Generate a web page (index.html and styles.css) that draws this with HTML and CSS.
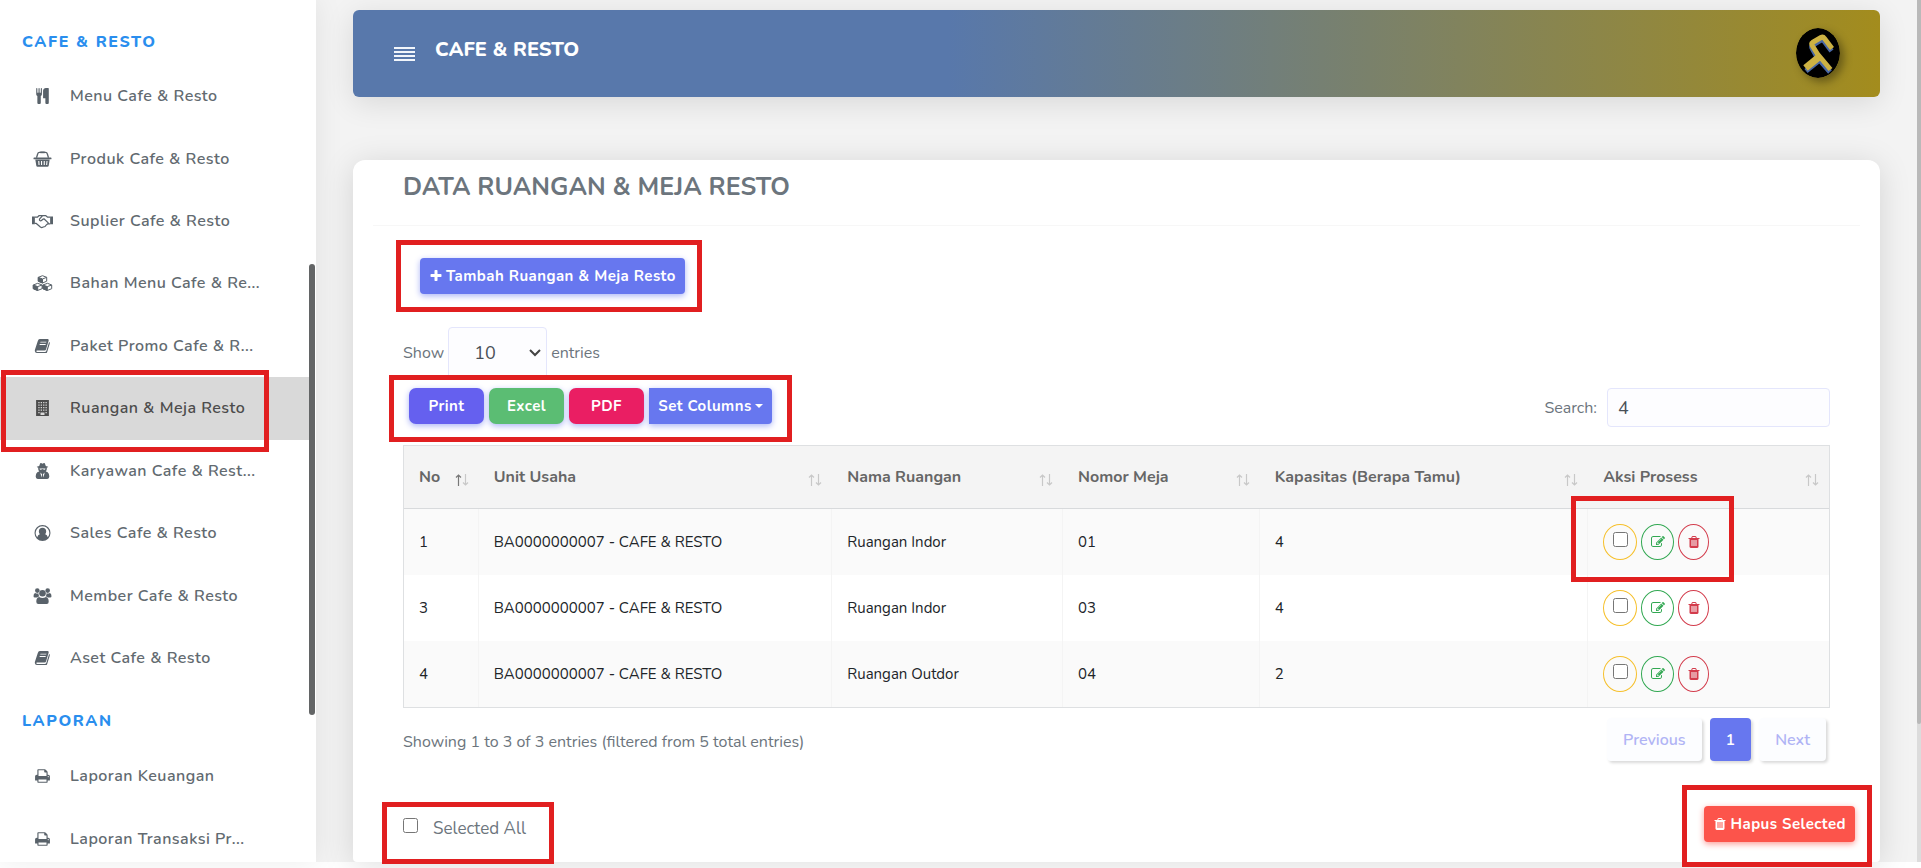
FILE: index.html
```html
<!DOCTYPE html>
<html lang="id">
<head>
<meta charset="utf-8">
<title>Data Ruangan &amp; Meja Resto</title>
<link rel="stylesheet" href="styles.css">
</head>
<body>
<svg class="sprite" aria-hidden="true">
  <symbol id="i-cutlery" viewBox="0 0 1792 1792"><path d="M832 64v640q0 61-35.500 111t-92.500 70v779q0 52-38 90t-90 38h-128q-52 0-90-38t-38-90v-779q-57-20-92.500-70t-35.500-111v-640q0-26 19-45t45-19 45 19 19 45v416q0 26 19 45t45 19 45-19 19-45v-416q0-26 19-45t45-19 45 19 19 45v416q0 26 19 45t45 19 45-19 19-45v-416q0-26 19-45t45-19 45 19 19 45zm768 0v1600q0 52-38 90t-90 38h-128q-52 0-90-38t-38-90v-512h-224q-13 0-22.500-9.500t-9.500-22.500v-800q0-132 94-226t226-94h256q26 0 45 19t19 45z"/></symbol>
  <symbol id="i-basket" viewBox="0 0 18 16"><path d="M.8 6.600h16.400a.8.8 0 0 1 0 1.700H.8a.8.8 0 0 1 0-1.700z"/><path fill-rule="evenodd" d="M1.800 8.600h14.400l-1 6.200a1.300 1.300 0 0 1-1.200 1H4a1.300 1.300 0 0 1-1.200-1zM4.700 10l.3 4h1.100l-.3-4zM7.500 10v4h1.100v-4zM10.200 10v4h1.100v-4zM13 10l-.4 4h1.100l.3-4z"/><path d="M3 6.800l1.300-4.300Q4.600 1.300 5.900 1.300h6.200q1.300 0 1.600 1.200L15 6.800" fill="none" stroke="currentColor" stroke-width="1.300"/><path d="M6.800.5h4.400v1.700H6.800z"/></symbol>
  <symbol id="i-handshake" viewBox="0 0 22 16"><path d="M0 3.400h3v8H0zM19 3.400h3v8h-3z"/><g fill="none" stroke="currentColor" stroke-width="1.300" stroke-linejoin="round"><path d="M3 4h2.600L7.500 2.300h3.300M19 4h-2.600l-2.200-1.700h-3L8 5.800q-.7 1.800 1 2 1.200 0 2.200-1.500l1.300-.6 4.500 4.300q.3 1-1 1.200M3 10.600h1.500l4.300 3.700q1.300 1 2.500.2 2.800-.2 3.500-2.200l1.400-1.200H19"/></g></symbol>
  <symbol id="i-cubes" viewBox="0 0 20 16"><g stroke="currentColor" stroke-width="1" stroke-linejoin="round"><path fill="none" d="M5.800 2.300v3.900L10 8l4.200-1.800V2.300L10 .7zM.8 10v3.700l4.200 1.800 4.600-1.800V10L5.200 8.300zM10.400 10v3.700l4.400 1.800 4.400-1.800V10l-4.200-1.700z"/><path d="M5.800 2.300L10 4v4L5.800 6.200zM.8 10l4.400 1.600v3.900L.8 13.700zM10.400 10l4.400 1.600v3.900l-4.400-1.800z"/><path fill="none" d="M10 4l4.200-1.700M5.200 11.600L9.600 10M14.800 11.600l4.400-1.600"/></g></symbol>
  <symbol id="i-book" viewBox="0 0 16 16"><path fill-rule="evenodd" d="M5.300 1h8q1.200.2.900 1.400l-2.700 9.200q-.3 1-1.400 1H2.600q-1 0-.8.700.2.600 1 .6h7.900q.8 0 1.100-.8L14.600 4q1 .4.700 1.500l-2.600 8.400q-.4 1.200-1.500 1.200H2.700Q.8 15 .4 13.200q-.2-.8.100-1.600L3.300 2.900Q3.800 1.200 5.300 1zM6 3.700l-.3.900h6l.3-.9zM5.300 6l-.3.900h6l.3-.9z"/></symbol>
  <symbol id="i-building" viewBox="0 0 14 16"><path fill-rule="evenodd" d="M.6 0h12.800v16H.6zM2.800 2v1.300h1.300V2zm2.400 0v1.300h1.300V2zm2.400 0v1.300h1.300V2zM10 2v1.300h1.300V2zM2.800 4.500v1.300h1.300V4.500zm2.400 0v1.300h1.300V4.500zm2.400 0v1.300h1.300V4.500zm2.400 0v1.300h1.300V4.500zM2.800 7v1.300h1.300V7zm2.400 0v1.300h1.300V7zm2.400 0v1.300h1.300V7zM10 7v1.300h1.300V7zM2.800 9.500v1.300h1.300V9.500zm2.400 0v1.300h1.300V9.500zm2.400 0v1.300h1.300V9.500zm2.400 0v1.300h1.300V9.500zM2.800 12v1.300h1.300V12zM10 12v1.300h1.300V12zM5 12.500V15h4v-2.500z"/></symbol>
  <symbol id="i-secret" viewBox="0 0 14 16"><path fill-rule="evenodd" d="M4.700.3Q5.600-.2 7 .7 8.400-.2 9.300.3l1 2.600 2.400.8q.2.600-1.500 1.100.5 2-1 3.700l1.700.6q2 1.400 1.900 4.500 0 2.200-2 2.400H2.200Q.2 15.800.2 13.600.1 10.500 2.100 9.100l1.700-.6q-1.500-1.700-1-3.700-1.700-.5-1.500-1.100l2.400-.8zM4 5.500q.2 1.300 1.300 1.200L7 5.900l1.700.8Q9.800 6.800 10 5.500zM4.800 9.500l1.200 5 .6-3.300zM9.200 9.500l-1.800 1.700.6 3.300z"/></symbol>
  <symbol id="i-usercircle" viewBox="0 0 16 16"><path fill-rule="evenodd" d="M8 0a8 8 0 1 1 0 16A8 8 0 0 1 8 0zm0 1.200A6.800 6.800 0 0 0 2.700 12.200Q3.300 9.600 5.300 9.200 4.300 8 4.300 6.300 4.500 2.800 8 2.700q3.500.1 3.700 3.600 0 1.700-1 2.900 2 .4 2.600 3A6.800 6.800 0 0 0 8 1.200z" transform="rotate(0)"/></symbol>
  <symbol id="i-users" viewBox="0 0 18 16"><circle cx="3.800" cy="2.600" r="2.300"/><circle cx="14.200" cy="2.600" r="2.300"/><circle cx="9" cy="5.200" r="3.300"/><path d="M1.700 5q1.800 1 3.300.2-.2 1.800.9 3.200-1.400 0-2.400 1.200H1.400Q0 9.500 0 8.200 0 5.400 1.700 5zM16.300 5q-1.800 1-3.300.2.200 1.800-.9 3.200 1.400 0 2.400 1.200h2.100Q18 9.500 18 8.200 18 5.400 16.300 5zM5.600 9Q9 11.200 12.400 9q2.800.6 2.800 4.700 0 2.200-2 2.300H4.800q-2-.1-2-2.300Q2.800 9.600 5.600 9z"/></symbol>
  <symbol id="i-print" viewBox="0 0 1792 1792"><path d="M448 1536h896v-256h-896v256zm0-640h896v-384h-160q-40 0-68-28t-28-68v-160h-640v640zm1152 64q0-26-19-45t-45-19-45 19-19 45 19 45 45 19 45-19 19-45zm128 0v416q0 13-9.500 22.500t-22.500 9.500h-224v160q0 40-28 68t-68 28h-960q-40 0-68-28t-28-68v-160h-224q-13 0-22.500-9.500t-9.500-22.500v-416q0-79 56.500-135.500t135.500-56.500h64v-544q0-40 28-68t68-28h672q40 0 88 20t76 48l152 152q28 28 48 76t20 88v256h64q79 0 135.500 56.500t56.500 135.500z"/></symbol>
  <symbol id="i-plus" viewBox="0 0 1792 1792"><path d="M1600 736v192q0 40-28 68t-68 28h-416v416q0 40-28 68t-68 28h-192q-40 0-68-28t-28-68v-416h-416q-40 0-68-28t-28-68v-192q0-40 28-68t68-28h416v-416q0-40 28-68t68-28h192q40 0 68 28t28 68v416h416q40 0 68 28t28 68z"/></symbol>
  <symbol id="i-trash" viewBox="0 0 1792 1792"><path d="M704 1376v-704q0-14-9-23t-23-9h-64q-14 0-23 9t-9 23v704q0 14 9 23t23 9h64q14 0 23-9t9-23zm256 0v-704q0-14-9-23t-23-9h-64q-14 0-23 9t-9 23v704q0 14 9 23t23 9h64q14 0 23-9t9-23zm256 0v-704q0-14-9-23t-23-9h-64q-14 0-23 9t-9 23v704q0 14 9 23t23 9h64q14 0 23-9t9-23zm-544-992h448l-48-117q-7-9-17-11h-317q-10 2-17 11zm928 32v64q0 14-9 23t-23 9h-96v948q0 83-47 143.500t-113 60.500h-832q-66 0-113-58.500t-47-141.500v-952h-96q-14 0-23-9t-9-23v-64q0-14 9-23t23-9h309l70-167q15-37 54-63t79-26h320q40 0 79 26t54 63l70 167h309q14 0 23 9t9 23z"/></symbol>
  <symbol id="i-edit" viewBox="0 0 1792 1792"><path d="M888 1184l116-116-152-152-116 116v56h96v96h56zm440-720q-16-16-33 1l-350 350q-17 17-1 33t33-1l350-350q17-17 1-33zm80 594v190q0 119-84.500 203.500t-203.500 84.500h-832q-119 0-203.500-84.500t-84.500-203.500v-832q0-119 84.500-203.500t203.500-84.500h832q63 0 117 25 15 7 18 23 3 17-9 29l-49 49q-14 14-32 8-23-6-45-6h-832q-66 0-113 47t-47 113v832q0 66 47 113t113 47h832q66 0 113-47t47-113v-126q0-13 9-22l64-64q15-15 35-7t20 29zm-96-738l288 288-672 672h-288v-288zm444 132l-92 92-288-288 92-92q28-28 68-28t68 28l152 152q28 28 28 68t-28 68z"/></symbol>
  <symbol id="i-up" viewBox="0 0 7 12"><path d="M3.500 12V1M1 3.500L3.500 1 6 3.500" fill="none" stroke="currentColor" stroke-width="1.200"/></symbol>
  <symbol id="i-down" viewBox="0 0 7 12"><path d="M3.500 0v11M1 8.500L3.500 11 6 8.500" fill="none" stroke="currentColor" stroke-width="1.200"/></symbol>
</svg>

<div class="app">
  <aside class="sidebar">
    <nav class="menu">
      <h2 class="menu-title">CAFE &amp; RESTO</h2>
      <a class="item" href="#"><svg><use href="#i-cutlery"/></svg>Menu Cafe &amp; Resto</a>
      <a class="item" href="#"><svg><use href="#i-basket"/></svg>Produk Cafe &amp; Resto</a>
      <a class="item" href="#"><svg><use href="#i-handshake"/></svg>Suplier Cafe &amp; Resto</a>
      <a class="item" href="#"><svg><use href="#i-cubes"/></svg>Bahan Menu Cafe &amp; Re...</a>
      <a class="item" href="#"><svg><use href="#i-book"/></svg>Paket Promo Cafe &amp; R...</a>
      <a class="item active mark mark-item" href="#"><svg><use href="#i-building"/></svg>Ruangan &amp; Meja Resto</a>
      <a class="item" href="#"><svg><use href="#i-secret"/></svg>Karyawan Cafe &amp; Rest...</a>
      <a class="item" href="#"><svg><use href="#i-usercircle"/></svg>Sales Cafe &amp; Resto</a>
      <a class="item" href="#"><svg><use href="#i-users"/></svg>Member Cafe &amp; Resto</a>
      <a class="item" href="#"><svg><use href="#i-book"/></svg>Aset Cafe &amp; Resto</a>
      <h2 class="menu-title second">LAPORAN</h2>
      <a class="item" href="#"><svg><use href="#i-print"/></svg>Laporan Keuangan</a>
      <a class="item" href="#"><svg><use href="#i-print"/></svg>Laporan Transaksi Pr...</a>
    </nav>
    <div class="side-thumb"></div>
  </aside>

  <main class="main">
    <header class="topbar">
      <button class="burger" type="button" aria-label="Menu"><svg viewBox="0 0 21 16"><path d="M0 0h21v2H0zM0 4h21v2H0zM0 8h21v2H0zM0 12h21v2H0z"/></svg></button>
      <h1 class="brand">CAFE &amp; RESTO</h1>
      <svg class="logo" viewBox="0 0 44 50" role="img" aria-label="Logo"><ellipse cx="22" cy="25" rx="22" ry="25" fill="#000"/><g fill="none" stroke="#4a68a5" stroke-width="5" stroke-linejoin="round"><path d="M35.500 23L28 13Q26.500 11.500 24.500 12.500L16.500 17.500Q15 18.500 16.500 21L21 29 34 44M10 43l12.500-10"/></g><g fill="none" stroke="#cdb243" stroke-linejoin="round"><path stroke-width="5" d="M36 20.500L28.500 10.500Q27 8.500 25 9.500L16.500 14.500Q15 15.500 16.500 18L21.500 26 34.500 41.500"/><path stroke-width="7" d="M9.500 40L23 29"/></g></svg>
    </header>

    <section class="card">
      <h2 class="title">DATA RUANGAN &amp; MEJA RESTO</h2>
      <div class="content">
        <div class="add-row"><span class="mark mark-add"><button class="btn" type="button"><svg class="ic"><use href="#i-plus"/></svg> Tambah Ruangan &amp; Meja Resto</button></span></div>

        <div class="length"><label for="len">Show</label><select id="len"><option>10</option><option>25</option></select><span>entries</span></div>

        <div class="tools">
          <div class="exports mark mark-tools">
            <button class="btn wide print" type="button">Print</button>
            <button class="btn wide excel" type="button">Excel</button>
            <button class="btn wide pdf" type="button">PDF</button>
            <button class="btn cols" type="button">Set Columns <i class="caret"></i></button>
          </div>
          <div class="search"><label for="q">Search:</label><input id="q" type="text" value="4"></div>
        </div>

        <table class="grid">
          <colgroup><col class="c1"><col class="c2"><col class="c3"><col class="c4"><col class="c5"><col class="c6"></colgroup>
          <thead><tr>
            <th class="asc">No<span class="sort"><svg><use href="#i-up"/></svg><svg><use href="#i-down"/></svg></span></th>
            <th>Unit Usaha<span class="sort"><svg><use href="#i-up"/></svg><svg><use href="#i-down"/></svg></span></th>
            <th>Nama Ruangan<span class="sort"><svg><use href="#i-up"/></svg><svg><use href="#i-down"/></svg></span></th>
            <th>Nomor Meja<span class="sort"><svg><use href="#i-up"/></svg><svg><use href="#i-down"/></svg></span></th>
            <th>Kapasitas (Berapa Tamu)<span class="sort"><svg><use href="#i-up"/></svg><svg><use href="#i-down"/></svg></span></th>
            <th>Aksi Prosess<span class="sort"><svg><use href="#i-up"/></svg><svg><use href="#i-down"/></svg></span></th>
          </tr></thead>
          <tbody>
            <tr><td>1</td><td>BA0000000007 - CAFE &amp; RESTO</td><td>Ruangan Indor</td><td>01</td><td>4</td>
              <td><div class="acts mark mark-acts"><label class="pill pick"><input type="checkbox" aria-label="Pilih 1"></label><button class="pill edit" type="button" aria-label="Edit"><svg><use href="#i-edit"/></svg></button><button class="pill del" type="button" aria-label="Hapus"><svg><use href="#i-trash"/></svg></button></div></td></tr>
            <tr><td>3</td><td>BA0000000007 - CAFE &amp; RESTO</td><td>Ruangan Indor</td><td>03</td><td>4</td>
              <td><div class="acts"><label class="pill pick"><input type="checkbox" aria-label="Pilih 3"></label><button class="pill edit" type="button" aria-label="Edit"><svg><use href="#i-edit"/></svg></button><button class="pill del" type="button" aria-label="Hapus"><svg><use href="#i-trash"/></svg></button></div></td></tr>
            <tr><td>4</td><td>BA0000000007 - CAFE &amp; RESTO</td><td>Ruangan Outdor</td><td>04</td><td>2</td>
              <td><div class="acts"><label class="pill pick"><input type="checkbox" aria-label="Pilih 4"></label><button class="pill edit" type="button" aria-label="Edit"><svg><use href="#i-edit"/></svg></button><button class="pill del" type="button" aria-label="Hapus"><svg><use href="#i-trash"/></svg></button></div></td></tr>
          </tbody>
        </table>

        <div class="foot">
          <p class="info">Showing 1 to 3 of 3 entries (filtered from 5 total entries)</p>
          <div class="pager"><button type="button" class="pg">Previous</button><button type="button" class="pg on">1</button><button type="button" class="pg">Next</button></div>
        </div>
      </div>

      <div class="bulk">
        <label class="all mark mark-all"><input type="checkbox"><span>Selected All</span></label>
        <span class="mark mark-del"><button class="btn danger" type="button"><svg class="ic"><use href="#i-trash"/></svg> Hapus Selected</button></span>
      </div>
    </section>
  </main>
  <div class="scroll"><div class="scroll-thumb"></div></div>
</div>
</body>
</html>
```
FILE: styles.css
```css
* { box-sizing: border-box; }
body {
  margin: 0;
  height: 100vh;
  overflow: hidden;
  background: #fff;
  color: #6c757d;
  font: 16px/22px Nunito, Lato, "Open Sans", sans-serif;
}
button, input, select { font: inherit; }
.sprite { position: absolute; width: 0; height: 0; }

.app { display: flex; height: calc(100vh - 6px); background: #f3f3f3; }

/* red frames drawn over highlighted controls */
.mark { position: relative; }
.mark::after {
  content: "";
  position: absolute;
  border: 5px solid #e11f20;
  pointer-events: none;
  z-index: 3;
}
.mark-item::after { inset: -7px 40px -12px 1px; }
.mark-add::after { inset: -18px -17px -18px -24px; }
.mark-tools::after { inset: -13px -20px -18px; }
.mark-acts::after { inset: -28px -25px -22px -32px; }
.mark-all::after { inset: -16px -28px -24px -21px; }
.mark-del::after { inset: -21px -17px -25px -22px; }

/* sidebar */
.sidebar {
  position: relative;
  flex: none;
  width: 316px;
  background: #fff;
  box-shadow: 0 0 28px rgba(0, 0, 0, .08);
}
.menu { display: flex; flex-direction: column; height: calc(100vh + 2px); padding-right: 7px; }
.menu-title {
  flex: none;
  height: 65px;
  margin: 0;
  padding: 31px 22px 0;
  color: #2a8eee;
  font-size: 16px;
  font-weight: 800;
  line-height: 22px;
  letter-spacing: .1em;
}
.menu-title.second { height: 56px; padding-top: 21px; }
.item {
  flex: 1 1 0;
  display: flex;
  align-items: center;
  gap: 17px;
  padding-left: 32px;
  color: #626a70;
  font-weight: 600;
  letter-spacing: .03em;
  text-decoration: none;
  white-space: nowrap;
}
.item svg { width: 21px; height: 16px; fill: currentColor; color: #59626a; }
.item.active { background: #d9d9d9; color: #4c4c4c; }
.item.active svg { color: #4c4c4c; }
.side-thumb {
  position: absolute;
  top: 264px;
  right: 1px;
  width: 6px;
  height: 451px;
  border-radius: 3px;
  background: #636566;
}

/* header */
.main { flex: 1; min-width: 0; padding: 10px 37px 0; }
.topbar {
  display: flex;
  align-items: flex-start;
  height: 87px;
  padding: 18px 40px 0 41px;
  border-radius: 6px;
  background: linear-gradient(90deg, #5878ab 39%, #a38c1d);
  box-shadow: 0 6px 30px rgba(0, 0, 0, .11);
}
.burger { margin-top: 19px; padding: 0; border: 0; background: none; line-height: 0; }
.burger svg { width: 21px; height: 16px; fill: #f2f6fb; }
.brand {
  flex: 1;
  margin: 9px 0 0 20px;
  color: #fff;
  font-size: 20px;
  font-weight: 800;
  line-height: 26px;
}
.logo { width: 44px; height: 50px; border-radius: 50%; box-shadow: 4px 4px 8px rgba(0, 0, 0, .35); }

/* card */
.card {
  margin-top: 63px;
  height: calc(100vh - 166px);
  border-radius: 12px 12px 4px 4px;
  background: #fff;
  box-shadow: 0 4px 32px rgba(0, 0, 0, .13);
}
.title {
  margin: 0 20px;
  padding: 11px 30px 22px;
  border-bottom: 1px solid #f7f7f7;
  color: #6c757d;
  font-size: 25px;
  font-weight: 700;
  line-height: 32px;
}
.content { padding: 32px 50px 0; }
.add-row { display: flex; padding-left: 17px; }
.add-row .mark, .bulk .mark { display: flex; }
.btn {
  display: flex;
  align-items: center;
  justify-content: center;
  gap: 3px;
  height: 36px;
  padding: 0 9px;
  border: 0;
  border-radius: 4px;
  background: #6777ef;
  box-shadow: 0 2px 6px #acb5f6;
  color: #fff;
  font-size: 15px;
  font-weight: 700;
  letter-spacing: .03em;
  white-space: nowrap;
}
.ic { width: 14px; height: 14px; fill: currentColor; }
.length { display: flex; align-items: center; gap: 4px; height: 52px; margin-top: 33px; }
.length select {
  appearance: none;
  width: 99px;
  height: 52px;
  padding: 0 25px;
  border: 1px solid #e4e6fc;
  border-radius: 4px;
  background: #fdfdff url("data:image/svg+xml,%3Csvg xmlns='http://www.w3.org/2000/svg' viewBox='0 0 12 8'%3E%3Cpath d='M1 1l5 5 5-5' fill='none' stroke='%23444' stroke-width='2'/%3E%3C/svg%3E") no-repeat right 5px center / 12px 8px;
  color: #495057;
  font-size: 18px;
}
.tools { display: flex; justify-content: space-between; margin-top: 9px; padding-left: 6px; }
.exports { display: flex; gap: 5px; height: 36px; }
.wide { width: 75px; border-radius: 7px; }
.print { background: #6560ef; }
.excel { background: #5bbd73; }
.pdf { background: #ea1e63; }
.cols { width: 123px; border-radius: 0 4px 4px 0; }
.caret { border: 4px solid transparent; border-top-color: #fff; border-bottom: 0; }
.search { display: flex; align-items: center; gap: 10px; }
.search input {
  width: 223px;
  height: 39px;
  padding: 0 10px;
  border: 1px solid #e4e6fc;
  border-radius: 4px;
  background: #fdfdff;
  color: #495057;
  font-size: 18px;
}

/* table */
.grid {
  width: 100%;
  margin-top: 18px;
  table-layout: fixed;
  border: 1px solid #dee0e2;
  border-collapse: separate;
  border-spacing: 0;
}
.c1 { width: 5.250%; } .c2 { width: 24.800%; } .c3 { width: 16.200%; }
.c4 { width: 13.800%; } .c5 { width: 23.050%; } .c6 { width: 16.900%; }
.grid th {
  position: relative;
  height: 63px;
  padding: 0 15px;
  border-bottom: 1px solid #d8dadc;
  background: #f4f4f4;
  color: #666;
  font-weight: 700;
  text-align: left;
}
.sort { position: absolute; right: 10px; bottom: 22px; display: flex; color: #c8c8c8; }
.sort svg { width: 7px; height: 12px; }
.asc .sort svg:first-child { color: #777; }
.grid td {
  height: 66px;
  padding: 0 15px;
  border-right: 1px solid #f4f4f4;
  color: #212529;
  font-size: 15px;
}
.grid td:last-child { border-right: 0; }
.grid tbody tr:nth-child(odd) { background: #fafafa; }
.acts { display: inline-flex; gap: 4px; vertical-align: middle; }
.pill {
  display: flex;
  align-items: center;
  justify-content: center;
  height: 36px;
  padding: 0;
  border: 1px solid;
  border-radius: 50%;
  background: none;
}
.pill svg { width: 16px; height: 14px; fill: currentColor; }
.pick { width: 34px; color: #f6c02c; padding-bottom: 6px; }
.edit { width: 33px; color: #32a852; }
.del { width: 31px; color: #d33c4c; }
input[type="checkbox"] { width: 15px; height: 15px; margin: 0; }

/* footer */
.foot { display: flex; justify-content: space-between; padding-right: 4px; }
.info { margin: 23px 0 0; }
.pager { display: flex; gap: 8px; margin-top: 10px; }
.pg {
  height: 43px;
  padding: 0 16px;
  border: 0;
  border-radius: 4px;
  background: #fcfdff;
  box-shadow: 2px 2px 3px rgba(0, 0, 0, .15);
  color: #b0b4f5;
  font-weight: 600;
}
.pg.on { background: #6777ef; color: #fff; }
.bulk {
  display: flex;
  justify-content: space-between;
  align-items: flex-start;
  margin-top: 45px;
  padding: 0 25px 0 50px;
}
.all { gap: 15px; margin-top: 12px; font-size: 17px; }
.danger { background: #fc544b; box-shadow: 0 2px 6px #fd9b96; }

/* page scrollbar */
.scroll { flex: none; width: 4px; background: #dcdcdc; }
.scroll-thumb { height: 84%; border-radius: 0 0 3px 3px; background: #b9b9b9; }
```
